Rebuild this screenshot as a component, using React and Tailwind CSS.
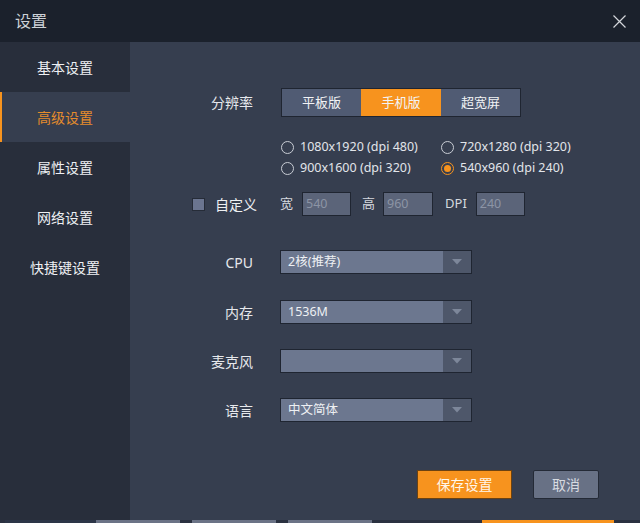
import { useState } from "react";

const font = { fontFamily: '"Noto Sans", "Noto Sans CJK SC", sans-serif' };

const menu = ["基本设置", "高级设置", "属性设置", "网络设置", "快捷键设置"];

const Radio = ({ checked, label }) => (
    <div className="flex items-center h-[21px]">
        {checked ? (
            <span className="w-[13px] h-[13px] rounded-full border border-[#f7931e] flex items-center justify-center">
                <span className="w-[7px] h-[7px] rounded-full bg-[#f7931e]" />
            </span>
        ) : (
            <span className="w-[13px] h-[13px] rounded-full border border-[#c9cdd5]" />
        )}
        <span className="ml-[6px] text-[12.5px] text-[#e2e5ea] leading-none">{label}</span>
    </div>
);

const Select = ({ label, value, className }) => (
    <div className={"flex items-center h-[24px] " + (className || "")}>
        <div className="w-[123px] text-right text-[14px] text-[#e6e8ec]">{label}</div>
        <div className="ml-[27px] w-[192px] h-[24px] flex border border-[#1f2531] bg-[#6c778f]">
            <div className="flex-1 pl-[7px] flex items-center text-[12.5px] text-[#eef0f3]">{value}</div>
            <div className="w-[28px] bg-[#4e576a] flex items-center justify-center">
                <svg width="10" height="6" viewBox="0 0 10 6">
                    <path d="M0 0 L10 0 L5 5.5 Z" fill="#7d879a" />
                </svg>
            </div>
        </div>
    </div>
);

const Field = ({ value, className }) => (
    <div className={"h-[24px] border border-[#1f2531] bg-[#5b6479] flex items-center pl-[3px] text-[12.5px] text-[#8c94a5] " + (className || "")}>
        {value}
    </div>
);

export default function App() {
    const [active, setActive] = useState(1);
    const [mode, setMode] = useState(1);

    return (
        <div className="w-[640px] h-[523px] flex flex-col bg-[#363e4f]" style={font}>
            {/* title bar */}
            <div className="h-[42px] bg-[#1b212c] flex items-center justify-between pl-[15px] pr-[14px]">
                <span className="text-[16px] text-[#cdd1d7]">设置</span>
                <svg width="13" height="13" viewBox="0 0 13 13">
                    <path d="M0.5 0.5 L12.5 12.5 M12.5 0.5 L0.5 12.5" stroke="#d3d6db" strokeWidth="1.2" />
                </svg>
            </div>

            <div className="flex-1 flex">
                {/* sidebar */}
                <div className="w-[130px] bg-[#282e3b] flex flex-col">
                    {menu.map((m, i) => (
                        <div
                            key={m}
                            onClick={() => setActive(i)}
                            className={
                                "h-[50px] flex items-center justify-center text-[14px] cursor-pointer " +
                                (i === active
                                    ? "bg-[#363e4f] text-[#e58c2c] border-l-2 border-[#f7931e] pr-[2px]"
                                    : "text-[#eef0f3]")
                            }
                        >
                            {m}
                        </div>
                    ))}
                </div>

                {/* main */}
                <div className="flex-1 flex flex-col pt-[46px]">
                    <div className="flex items-center h-[29px]">
                        <div className="w-[123px] text-right text-[14px] text-[#e6e8ec]">分辨率</div>
                        <div className="ml-[28px] flex border border-[#1f2531] h-[29px]">
                            {["平板版", "手机版", "超宽屏"].map((s, i) => (
                                <div
                                    key={s}
                                    onClick={() => setMode(i)}
                                    className={
                                        "flex items-center justify-center text-[13px] text-[#f2f3f5] cursor-pointer " +
                                        (i === 1 ? "w-[80px] " : "w-[79px] ") +
                                        (i === mode ? "bg-[#f7931e]" : "bg-[#505b73]")
                                    }
                                >
                                    {s}
                                </div>
                            ))}
                        </div>
                    </div>

                    <div className="mt-[20px] ml-[151px] grid grid-cols-[160px_1fr]">
                        <Radio label="1080x1920 (dpi 480)" />
                        <Radio label="720x1280 (dpi 320)" />
                        <Radio label="900x1600 (dpi 320)" />
                        <Radio checked label="540x960 (dpi 240)" />
                    </div>

                    <div className="mt-[13px] flex items-center h-[24px]">
                        <div className="w-[127px] flex items-center justify-end">
                            <span className="w-[13px] h-[13px] bg-[#6b7590] border border-[#262c38]" />
                            <span className="ml-[10px] text-[14px] text-[#eef0f3]">自定义</span>
                        </div>
                        <span className="ml-[23px] text-[13px] text-[#d5d9df]">宽</span>
                        <Field value="540" className="ml-[9px] w-[49px]" />
                        <span className="ml-[11px] text-[13px] text-[#d5d9df]">高</span>
                        <Field value="960" className="ml-[8px] w-[50px]" />
                        <span className="ml-[12px] text-[13px] text-[#d5d9df]">DPI</span>
                        <Field value="240" className="ml-[9px] w-[49px]" />
                    </div>

                    <Select label="CPU" value="2核(推荐)" className="mt-[34px]" />
                    <Select label="内存" value="1536M" className="mt-[26px]" />
                    <Select label="麦克风" value="" className="mt-[25px]" />
                    <Select label="语言" value="中文简体" className="mt-[25px]" />

                    <div className="mt-[48px] ml-[287px] flex">
                        <button className="w-[95px] h-[29px] bg-[#f7931e] border border-[#6b4212] text-[14px] text-[#fff6ea]">
                            保存设置
                        </button>
                        <button className="ml-[21px] w-[66px] h-[29px] bg-[#687185] border border-[#242a36] rounded-[2px] text-[14px] text-[#d7dbe1]">
                            取消
                        </button>
                    </div>
                </div>
            </div>

            {/* edge of the window behind */}
            <div className="h-[3px] flex bg-[#2a3140]">
                <div className="ml-[5px] w-[91px] bg-[#2c3547]" />
                <div className="w-[84px] bg-[#6b7386]" />
                <div className="ml-[12px] w-[84px] bg-[#6b7386]" />
                <div className="ml-[12px] w-[84px] bg-[#6b7386]" />
                <div className="ml-[110px] w-[132px] bg-[#f7931e]" />
            </div>
        </div>
    );
}
